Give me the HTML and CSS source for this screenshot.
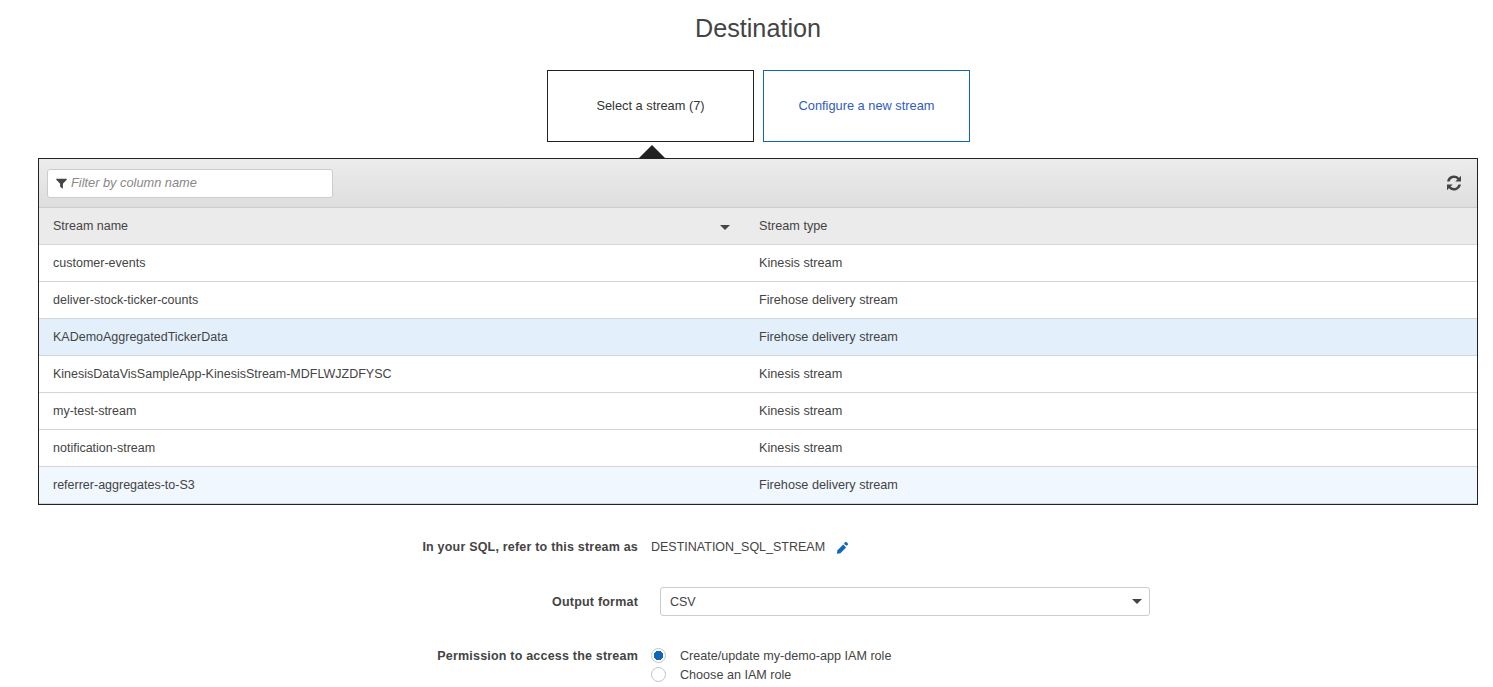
FILE: index.html
```html
<!DOCTYPE html>
<html lang="en">
<head>
<meta charset="utf-8">
<title>Destination</title>
<link rel="stylesheet" href="styles.css">
</head>
<body>
<main class="page">
  <h1 class="title">Destination</h1>
  <div class="tabs">
    <button class="tab tab-active" type="button">Select a stream (7)<span class="tab-arrow"></span></button>
    <button class="tab tab-link" type="button">Configure a new stream</button>
  </div>
  <section class="panel">
    <div class="toolbar">
      <div class="filter">
        <svg class="filter-icon" viewBox="0 0 12 12"><path d="M0.3 0.8h11.4v1.2L7.5 6.2V11.7L4.5 9.6V6.2L0.3 2z"/></svg>
        <span class="filter-text">Filter by column name</span>
      </div>
      <svg class="refresh" viewBox="0 0 16 16"><path d="M15 .8v5.7H9.3l2.1-2.1A4.6 4.6 0 0 0 3.6 6.4H1.1A7 7 0 0 1 13.1 2.7z"/><path d="M1 15.2V9.5h5.7l-2.1 2.1a4.6 4.6 0 0 0 7.8-2h2.5A7 7 0 0 1 2.9 13.3z"/></svg>
    </div>
    <div class="row row-head">
      <div class="cell cell-name">Stream name<span class="caret caret-sort"></span></div>
      <div class="cell cell-type">Stream type</div>
    </div>
    <div class="row"><div class="cell cell-name">customer-events</div><div class="cell cell-type">Kinesis stream</div></div>
    <div class="row"><div class="cell cell-name">deliver-stock-ticker-counts</div><div class="cell cell-type">Firehose delivery stream</div></div>
    <div class="row row-selected"><div class="cell cell-name">KADemoAggregatedTickerData</div><div class="cell cell-type">Firehose delivery stream</div></div>
    <div class="row"><div class="cell cell-name">KinesisDataVisSampleApp-KinesisStream-MDFLWJZDFYSC</div><div class="cell cell-type">Kinesis stream</div></div>
    <div class="row"><div class="cell cell-name">my-test-stream</div><div class="cell cell-type">Kinesis stream</div></div>
    <div class="row"><div class="cell cell-name">notification-stream</div><div class="cell cell-type">Kinesis stream</div></div>
    <div class="row row-hover"><div class="cell cell-name">referrer-aggregates-to-S3</div><div class="cell cell-type">Firehose delivery stream</div></div>
  </section>
  <div class="form">
    <div class="field field-sql">
      <div class="label">In your SQL, refer to this stream as</div>
      <div class="value">
        <span>DESTINATION_SQL_STREAM</span>
        <svg class="pencil" viewBox="0 0 13 13"><path d="M9.2 1.2a1 1 0 0 1 1.4 0l1.2 1.2a1 1 0 0 1 0 1.4l-1 1L7.9 2.9z"/><path d="M7.2 3.6l2.9 2.9-5.7 5.7L.9 12.7l.6-3.4z"/></svg>
      </div>
    </div>
    <div class="field field-format">
      <div class="label">Output format</div>
      <div class="select">CSV<span class="caret caret-select"></span></div>
    </div>
    <div class="field field-perm">
      <div class="label">Permission to access the stream</div>
      <div class="radios">
        <div class="radio-row"><span class="radio radio-on"></span>Create/update my-demo-app IAM role</div>
        <div class="radio-row"><span class="radio"></span>Choose an IAM role</div>
      </div>
    </div>
  </div>
</main>
</body>
</html>
```
FILE: styles.css
```css
* { box-sizing: border-box; }
html, body { margin: 0; padding: 0; background: #fff; overflow: hidden; }
body { font-family: "Liberation Sans", Arial, sans-serif; font-size: 12.5px; color: #444; height: 687px; }
.page { width: 1440px; margin-left: 38px; }
.title { margin: 0; height: 70px; padding-top: 14px; text-align: center; font-size: 25.2px; line-height: 29px; font-weight: 400; color: #444; }
.tabs { display: flex; justify-content: center; gap: 9px; height: 88px; padding-left: 1px; }
.tab { position: relative; width: 207px; height: 72px; background: #fff; border: 1px solid #1066b7; font: inherit; font-size: 12.8px; color: #2f5cc0; padding: 0 0 2px; }
.tab-active { border-color: #222; color: #333; }
.tab-arrow { position: absolute; left: 91px; top: 74px; width: 0; height: 0; border-left: 13px solid transparent; border-right: 13px solid transparent; border-bottom: 13px solid #222; }
.panel { height: 347px; border: 1px solid #222; }
.toolbar { height: 49px; display: flex; align-items: center; justify-content: space-between; padding: 0 15px 0 8px; background: linear-gradient(#ececec, #dedede); border-bottom: 1px solid #ccc; }
.filter { width: 286px; height: 29px; display: flex; align-items: center; gap: 4px; padding-left: 8px; background: #fff; border: 1px solid #ccc; border-radius: 3px; }
.filter-icon { width: 11px; height: 11px; fill: #444; }
.filter-text { font-size: 12.8px; font-style: italic; color: #888; padding-bottom: 2px; }
.refresh { width: 16px; height: 16px; fill: #444; }
.row { display: flex; height: 37px; align-items: center; border-bottom: 1px solid #d5d5d5; background: #fff; }
.row-head { height: 37px; background: #ebebeb; }
.row-selected { background: #e3f0fc; }
.row-hover { background: #f0f7fe; }
.cell { padding-left: 14px; }
.cell-name { position: relative; width: 706px; }
.cell-type { font-size: 12.7px; }
.caret { position: absolute; width: 0; height: 0; border-left: 5px solid transparent; border-right: 5px solid transparent; border-top: 5px solid #444; }
.caret-sort { right: 15px; top: 6px; }
.form { padding-top: 26px; }
.field { display: flex; align-items: center; }
.label { width: 600px; line-height: 19px; text-align: right; font-weight: 700; letter-spacing: 0.2px; color: #444; }
.field-sql { height: 32px; }
.value { display: flex; align-items: center; gap: 11px; margin-left: 13px; color: #444; }
.pencil { width: 13px; height: 13px; fill: #1066b7; }
.field-format { margin-top: 24px; height: 29px; }
.field-format .label { padding-top: 1px; }
.select { position: relative; width: 490px; height: 29px; margin-left: 22px; padding-left: 9px; line-height: 28px; border: 1px solid #ccc; border-radius: 3px; background: #fff; }
.caret-select { right: 7px; top: 11px; }
.field-perm { margin-top: 30px; align-items: flex-start; }
.field-perm .label { padding-top: 1px; }
.radios { margin-left: 13px; font-size: 12.6px; }
.radio-row { display: flex; align-items: center; height: 19px; }
.radio { width: 15px; height: 15px; margin-right: 14px; border: 1px solid #c4c4c4; border-radius: 50%; background: #fff; }
.radio-on { background: radial-gradient(circle, #1066b7 0 4.5px, #fff 5px); }
```
